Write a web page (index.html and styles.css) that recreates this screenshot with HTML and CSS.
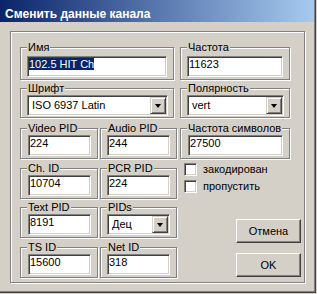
FILE: index.html
```html
<!DOCTYPE html>
<html>
<head>
	<meta charset="utf-8">
	<title>Сменить данные канала</title>
	<link rel="stylesheet" href="styles.css">
</head>
<body>

<!-- окно диалога -->
<div class="window">
	<div class="titlebar">Сменить данные канала</div>

	<div class="client">
		<div class="frame">

			<!-- левая колонка -->
			<div class="col-left">
				<div class="group g-top wide">
					<span class="cap">Имя</span>
					<div class="edit"><span class="sel">102.5 HIT Ch</span></div>
				</div>
				<div class="group g-combo wide">
					<span class="cap">Шрифт</span>
					<div class="combo"><span class="val">ISO 6937 Latin</span><span class="drop"></span></div>
				</div>
				<div class="pair r3">
					<div class="group g-row a"><span class="cap">Video PID</span><div class="edit">224</div></div>
					<div class="group g-row b"><span class="cap">Audio PID</span><div class="edit">244</div></div>
				</div>
				<div class="pair r4">
					<div class="group g-row a"><span class="cap">Ch. ID</span><div class="edit">10704</div></div>
					<div class="group g-row b"><span class="cap">PCR PID</span><div class="edit">224</div></div>
				</div>
				<div class="pair r5">
					<div class="group g-row a"><span class="cap">Text PID</span><div class="edit">8191</div></div>
					<div class="group g-row b"><span class="cap">PIDs</span><div class="combo"><span class="val">Дец</span><span class="drop"></span></div></div>
				</div>
				<div class="pair r6">
					<div class="group g-row a"><span class="cap">TS ID</span><div class="edit">15600</div></div>
					<div class="group g-row b"><span class="cap">Net ID</span><div class="edit">318</div></div>
				</div>
			</div>

			<!-- правая колонка -->
			<div class="col-right">
				<div class="group g-top right">
					<span class="cap">Частота</span>
					<div class="edit">11623</div>
				</div>
				<div class="group g-combo right">
					<span class="cap">Полярность</span>
					<div class="combo"><span class="val">vert</span><span class="drop"></span></div>
				</div>
				<div class="group g-row right r3">
					<span class="cap">Частота символов</span>
					<div class="edit">27500</div>
				</div>
				<label class="check c1"><span class="box"></span>закодирован</label>
				<label class="check c2"><span class="box"></span>пропустить</label>
				<div class="btn cancel">Отмена</div>
				<div class="btn ok">OK</div>
			</div>

		</div>
	</div>
</div>

</body>
</html>
```

FILE: styles.css
```css
* { margin:0px; padding:0px; box-sizing:border-box; }
body { background:#d4d0c8; font:11px/13px "Liberation Sans", Arial, sans-serif; color:#000; }

.window { width:316px; height:293px; background:#d4d0c8; border-right:1px solid #404040; border-bottom:1px solid #404040; box-shadow:inset -1px -1px 0 #808080; }

.titlebar { height:22px; width:314px; padding:7px 0 0 5px; line-height:14px; font-size:12px; font-weight:bold; color:#fff; background:linear-gradient(to right, #0a246a, #a6caf0); white-space:nowrap; }

.client { padding:9px 0 0 10px; }

/* рамка с вдавленной линией */
.frame { width:295px; height:252px; border:1px solid #808080; box-shadow:inset 1px 1px 0 #fff, 1px 1px 0 #fff; display:flex; padding:0 0 0 9px; }

.col-left { width:160px; display:flex; flex-direction:column; }
.col-right { width:122px; display:flex; flex-direction:column; }

.group { position:relative; border:1px solid #808080; box-shadow:inset 1px 1px 0 #fff, 1px 1px 0 #fff; }
.group .cap { position:absolute; top:-7px; left:6px; padding:0 1px; background:#d4d0c8; line-height:13px; white-space:nowrap; }

.g-top { height:33px; margin-top:15px; padding:8px 6px 0 6px; }
.g-combo { height:30px; margin-top:8px; padding:6px 5px 0 6px; }
.g-row { height:31px; padding:6px 6px 0 7px; }

.wide { width:154px; }
.right { width:110px; }

.pair { display:flex; }
.pair .a { width:78px; }
.pair .b { width:77px; margin-left:2px; padding-left:6px; }
.r3 { margin-top:10px; }
.r4 { margin-top:9px; }
.r5 { margin-top:8px; }
.r6 { margin-top:9px; }

/* поле ввода */
.edit { height:21px; background:#fff; border:1px solid; border-color:#808080 #fff #fff #808080; box-shadow:inset 1px 1px 0 #404040, inset -1px -1px 0 #d4d0c8; padding:1px 1px 0 1px; white-space:nowrap; overflow:hidden; }
.edit .sel { background:#0a246a; color:#fff; }

/* выпадающий список */
.combo { height:21px; background:#fff; border:1px solid; border-color:#808080 #fff #fff #808080; box-shadow:inset 1px 1px 0 #404040, inset -1px -1px 0 #d4d0c8; display:flex; padding:1px; }
.combo .val { flex:1; padding:2px 0 0 3px; white-space:nowrap; }
.combo .drop { width:16px; height:17px; background:#d4d0c8; border:1px solid; border-color:#d4d0c8 #404040 #404040 #d4d0c8; box-shadow:inset 1px 1px 0 #fff, inset -1px -1px 0 #808080; display:flex; align-items:center; justify-content:center; }
.combo .drop:after { content:""; border-left:3.5px solid transparent; border-right:3.5px solid transparent; border-top:4px solid #000; margin-top:1px; }

/* флажки */
.check { display:flex; align-items:center; margin-left:4px; height:13px; }
.check .box { width:13px; height:13px; margin-right:6px; background:#fff; border:1px solid; border-color:#808080 #fff #fff #808080; box-shadow:inset 1px 1px 0 #404040, inset -1px -1px 0 #d4d0c8; }
.c1 { margin-top:4px; }
.c2 { margin-top:4px; }

/* кнопки */
.btn { width:65px; height:24px; margin-left:56px; text-align:center; line-height:22px; border:1px solid; border-color:#fff #404040 #404040 #fff; box-shadow:inset -1px -1px 0 #808080; }
.cancel { margin-top:26px; }
.ok { margin-top:10px; }
```
